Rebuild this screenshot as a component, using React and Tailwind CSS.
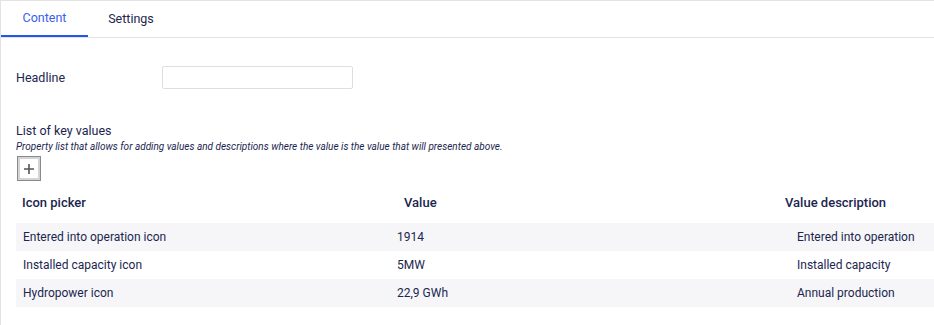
import React, { useState } from "react";

const rows = [
  { icon: "Entered into operation icon", value: "1914", description: "Entered into operation" },
  { icon: "Installed capacity icon", value: "5MW", description: "Installed capacity" },
  { icon: "Hydropower icon", value: "22,9 GWh", description: "Annual production" },
];

function Tabs({ active, onChange }) {
  const tabs = ["Content", "Settings"];
  return (
    <div className="flex h-[37px] border-b border-[#e3e3e3]">
      {tabs.map((tab) => (
        <button
          key={tab}
          onClick={() => onChange(tab)}
          className={
            tab === active
              ? "h-[36px] w-[87px] border-b-2 border-[#2452f5] pt-[1px] text-[12.5px] text-[#3a5cf0]"
              : "h-[36px] w-[86px] pt-[1px] text-[12.5px] text-[#1b264f]"
          }
        >
          {tab}
        </button>
      ))}
    </div>
  );
}

export default function App() {
  const [activeTab, setActiveTab] = useState("Content");

  return (
    <div
      className="h-[325px] w-[934px] overflow-hidden border-l border-t border-[#e3e3e3] bg-white text-[#1b264f]"
      style={{ fontFamily: "Roboto, 'Liberation Sans', sans-serif" }}
    >
      <Tabs active={activeTab} onChange={setActiveTab} />

      {/* Headline */}
      <div className="mt-[28px] flex items-center pl-[15px]">
        <label className="w-[146px] pt-[1px] text-[12.5px]">Headline</label>
        <input
          type="text"
          className="h-[23px] w-[191px] rounded-[2px] border border-[#dedede] bg-white px-2 text-[13px] outline-none"
        />
      </div>

      {/* List of key values */}
      <div className="mt-[34px] pl-[15px]">
        <div className="text-[12.5px] leading-[16px]">List of key values</div>
        <div className="mt-[2px] text-[10px] italic leading-[12px]">
          Property list that allows for adding values and descriptions where the value is the value that will presented above.
        </div>
        <button className="ml-[1px] mt-[3px] flex h-[25px] w-[24px] items-center justify-center border border-[#8a8a8a] bg-white shadow-[inset_0_0_0_2px_#d4d4d4]">
          <svg width="12" height="12" viewBox="0 0 12 12">
            <path d="M6 1v10M1 6h10" stroke="#555" strokeWidth="1.6" />
          </svg>
        </button>
      </div>

      {/* Table */}
      <div className="ml-[15px] mt-[1px]">
        <div className="grid h-[41px] grid-cols-[374px_389px_1fr] items-center text-[13px] font-medium">
          <div className="pl-[6px]">Icon picker</div>
          <div className="pl-[14px]">Value</div>
          <div className="pl-[6px]">Value description</div>
        </div>
        {rows.map((row, i) => (
          <div
            key={row.icon}
            className={
              i % 2 === 0
                ? "grid h-[28px] grid-cols-[374px_389px_1fr] items-center bg-[#f6f6f9] text-[12px]"
                : "grid h-[28px] grid-cols-[374px_389px_1fr] items-center bg-white text-[12px]"
            }
          >
            <div className="pl-[7px]">{row.icon}</div>
            <div className="pl-[7px]">{row.value}</div>
            <div className="pl-[18px]">{row.description}</div>
          </div>
        ))}
      </div>
    </div>
  );
}
